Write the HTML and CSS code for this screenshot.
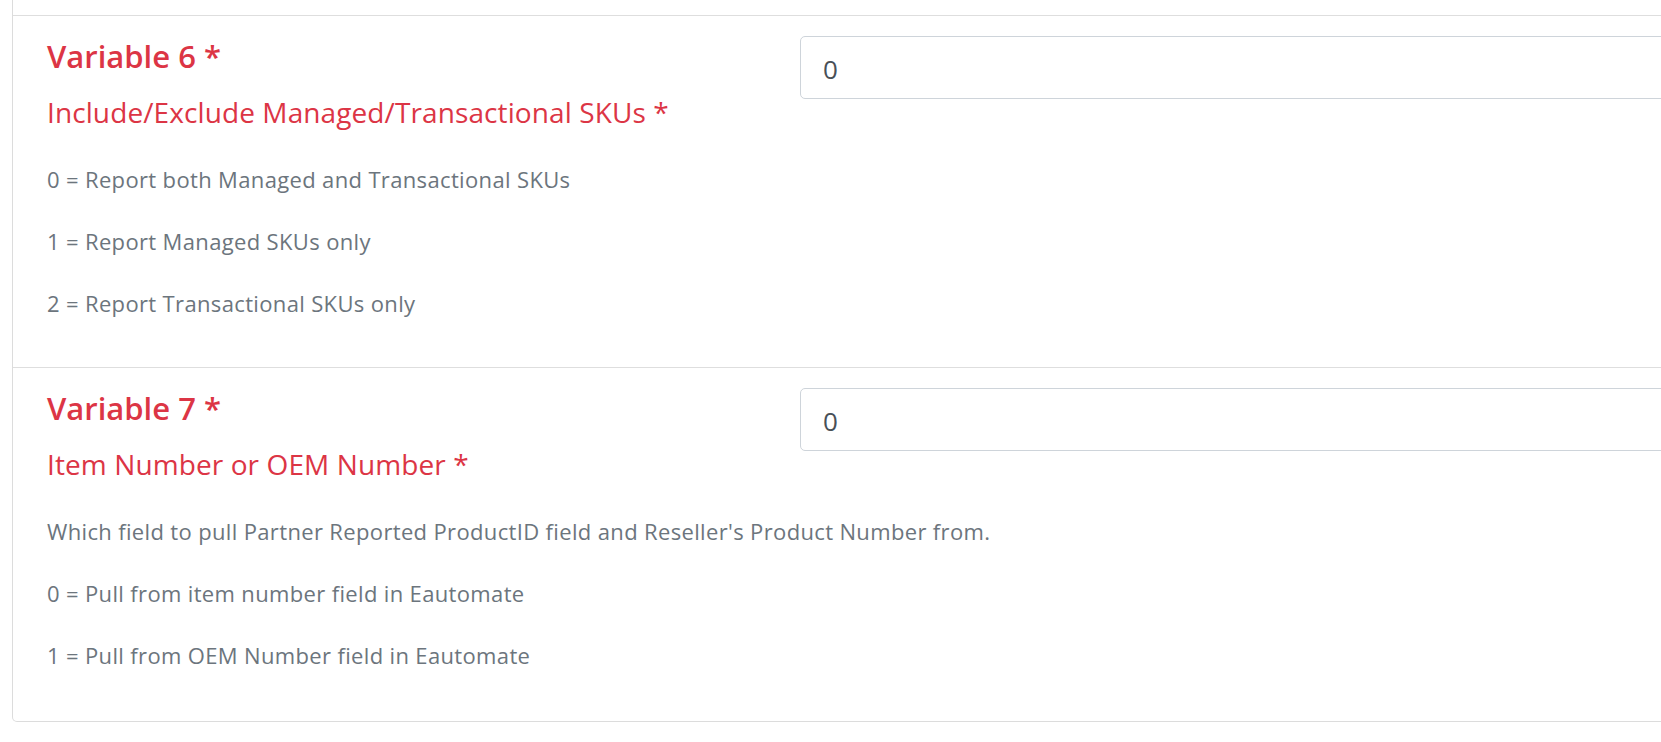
FILE: index.html
```html
<!DOCTYPE html>
<html lang="en">
<head>
    <meta charset="UTF-8">
    <meta name="viewport" content="width=device-width, initial-scale=1.0">
    <title>Report Variables</title>
    <link rel="stylesheet" href="styles.css">
</head>
<body>

<div class="card">
    <div class="card-prev"></div>

    <div class="var-row">
        <div class="var-head">
            <div class="var-titles">
                <h3 class="var-title">Variable 6 *</h3>
                <h5 class="var-name">Include/Exclude Managed/Transactional SKUs *</h5>
            </div>
            <div class="var-input">
                <input type="text" class="form-control" value="0">
            </div>
        </div>
        <p class="var-desc">0 = Report both Managed and Transactional SKUs</p>
        <p class="var-desc">1 = Report Managed SKUs only</p>
        <p class="var-desc">2 = Report Transactional SKUs only</p>
    </div>

    <div class="var-row">
        <div class="var-head">
            <div class="var-titles">
                <h3 class="var-title">Variable 7 *</h3>
                <h5 class="var-name">Item Number or OEM Number *</h5>
            </div>
            <div class="var-input">
                <input type="text" class="form-control" value="0">
            </div>
        </div>
        <p class="var-desc">Which field to pull Partner Reported ProductID field and Reseller's Product Number from.</p>
        <p class="var-desc">0 = Pull from item number field in Eautomate</p>
        <p class="var-desc">1 = Pull from OEM Number field in Eautomate</p>
    </div>
</div>

</body>
</html>
```

FILE: styles.css
```css
body {
    font-family: "Open Sans", Arial, sans-serif;
    margin: 0;
    background-color: #fff;
    overflow: hidden;
}
.card {
    width: 1800px;
    margin-left: 12px;
    border: 1px solid #dcdcdc;
    border-top: none;
    border-radius: 0 0 5px 5px;
    background-color: #fff;
}
.card-prev {
    height: 15px;
    border-bottom: 1px solid #dedede;
}
.var-row {
    padding: 20px 34px 49px 34px;
    border-bottom: 1px solid #dedede;
}
.var-row:last-child {
    border-bottom: none;
    padding-bottom: 51px;
}
.var-head {
    display: grid;
    grid-template-columns: 753px 1fr;
}
.var-title {
    margin: 0;
    font-size: 31px;
    font-weight: 600;
    line-height: 40px;
    color: #dc3545;
}
.var-name {
    margin: 18px 0 0 0;
    font-size: 28px;
    font-weight: 400;
    line-height: 36px;
    letter-spacing: 0.1px;
    color: #dc3545;
}
.var-desc {
    margin: 34px 0 0 0;
    font-size: 22px;
    line-height: 30px;
    letter-spacing: 0.35px;
    color: #6c757d;
}
.var-desc + .var-desc {
    margin-top: 32px;
}
.form-control {
    box-sizing: border-box;
    width: 100%;
    height: 63px;
    padding: 2px 22px 0 22px;
    font-family: "Open Sans", Arial, sans-serif;
    font-size: 26px;
    color: #495057;
    border: 1px solid #ced4da;
    border-radius: 5px;
    background-color: #fff;
}
```
